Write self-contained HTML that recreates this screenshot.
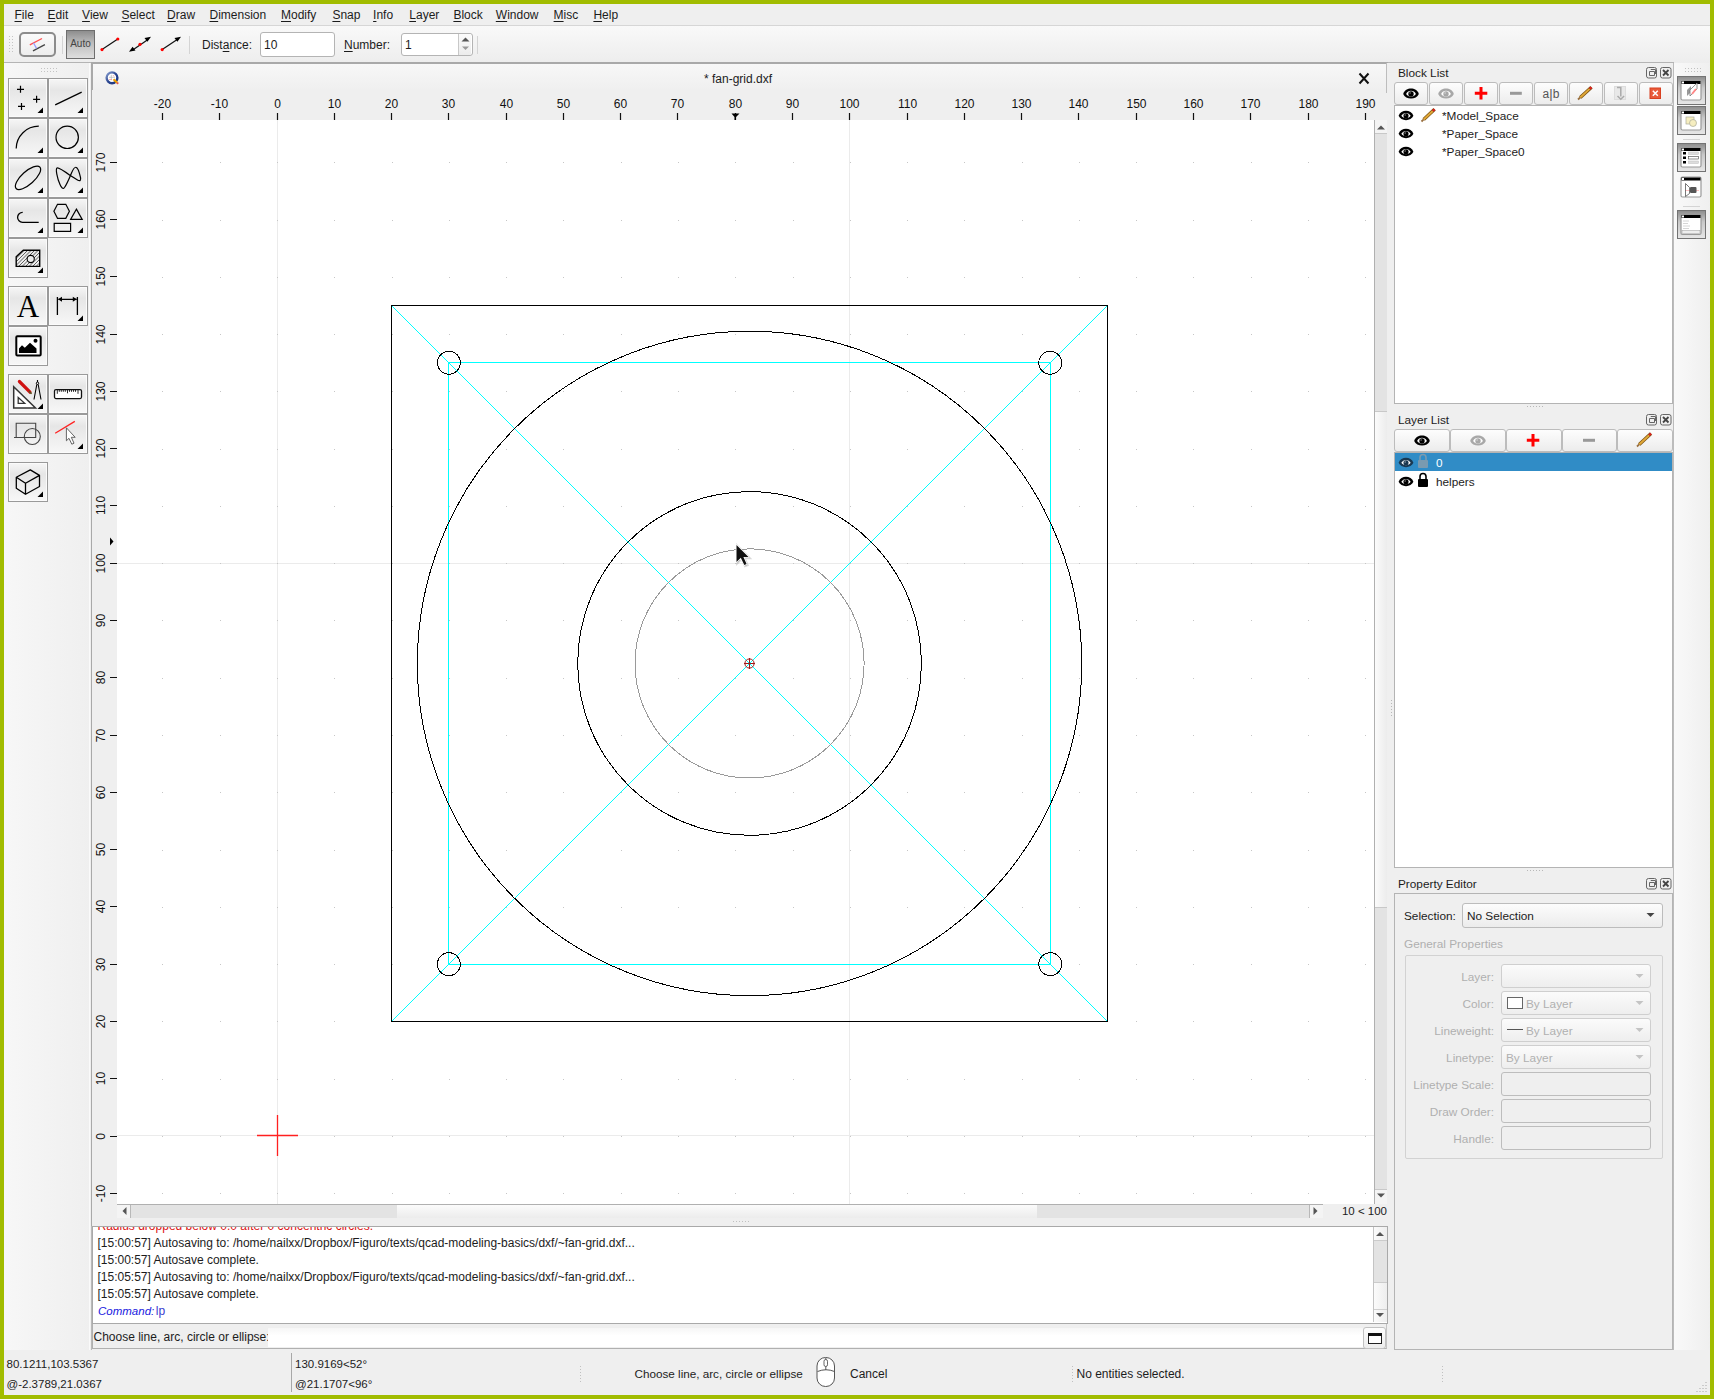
<!DOCTYPE html><html><head><meta charset="utf-8"><style>
html,body{margin:0;padding:0;}
body{width:1714px;height:1399px;overflow:hidden;background:#a1bc00;position:relative;font-family:"Liberation Sans", sans-serif;font-size:12px;color:#1c1c1c;}
.a{position:absolute;}
.t{position:absolute;white-space:nowrap;line-height:14px;}
u{text-decoration:underline;text-underline-offset:2px;text-decoration-thickness:1px;}
svg{overflow:visible}

</style></head><body>
<div class="a" style="left:4px;top:4px;width:1706px;height:1391px;background:#efefef"></div>
<div class="a" style="left:4px;top:25px;width:1706px;height:1px;background:#d6d6d6"></div>
<div class="t" style="left:14.5px;top:8px;font-size:12px"><u>F</u>ile</div>
<div class="t" style="left:47.6px;top:8px;font-size:12px"><u>E</u>dit</div>
<div class="t" style="left:82.1px;top:8px;font-size:12px"><u>V</u>iew</div>
<div class="t" style="left:121.4px;top:8px;font-size:12px"><u>S</u>elect</div>
<div class="t" style="left:167.1px;top:8px;font-size:12px"><u>D</u>raw</div>
<div class="t" style="left:209.5px;top:8px;font-size:12px"><u>D</u>imension</div>
<div class="t" style="left:281px;top:8px;font-size:12px"><u>M</u>odify</div>
<div class="t" style="left:332.4px;top:8px;font-size:12px"><u>S</u>nap</div>
<div class="t" style="left:373.1px;top:8px;font-size:12px"><u>I</u>nfo</div>
<div class="t" style="left:409.3px;top:8px;font-size:12px"><u>L</u>ayer</div>
<div class="t" style="left:453.4px;top:8px;font-size:12px"><u>B</u>lock</div>
<div class="t" style="left:495.8px;top:8px;font-size:12px"><u>W</u>indow</div>
<div class="t" style="left:553.6px;top:8px;font-size:12px"><u>M</u>isc</div>
<div class="t" style="left:593.4px;top:8px;font-size:12px"><u>H</u>elp</div>
<div class="a" style="left:4px;top:26px;width:1706px;height:37px;background:linear-gradient(#f9f9f9,#ededed)"></div>
<div class="a" style="left:4px;top:62px;width:1670px;height:1px;background:#b4b4b4"></div>
<svg class="a" style="left:0;top:0" width="20" height="60"><path d="M9 36h1v1h-1zM9 39h1v1h-1zM9 42h1v1h-1zM9 45h1v1h-1zM9 48h1v1h-1zM9 51h1v1h-1zM12 36h1v1h-1zM12 39h1v1h-1zM12 42h1v1h-1zM12 45h1v1h-1zM12 48h1v1h-1zM12 51h1v1h-1z" fill="#c4c4c4"/></svg>
<div class="a" style="left:19px;top:32px;width:33px;height:21px;border:2px solid #8c8c8c;border-radius:5px;background:linear-gradient(#fafafa,#ededed)"></div>
<svg class="a" style="left:0;top:0" width="60" height="60"><path d="M29.8 44.9L42 38.5" stroke="#ff5050" stroke-width="1.3"/><path d="M33 50.8L44.9 44.6" stroke="#444" stroke-width="1.3"/><path d="M33.5 42.9L36.5 48.4" stroke="#9a9aff" stroke-width="1.2"/></svg>
<div class="a" style="left:62px;top:36px;width:1px;height:18px;background:#d4d4d4"></div>
<div class="a" style="left:66px;top:30px;width:27px;height:27px;border:1px solid #6e6e6e;background:linear-gradient(#8e8e8e,#bdbdbd 45%,#dedede)"></div>
<div class="t" style="left:66px;top:37px;width:29px;text-align:center;font-size:10px;color:#444">Auto</div>
<svg class="a" style="left:95px;top:28px" width="95" height="34"><path d="M7 21.6L22.8 11" stroke="#111" stroke-width="1.2"/><circle cx="7" cy="21.6" r="1.6" fill="#f00"/><circle cx="22.8" cy="11" r="1.6" fill="#f00"/><path d="M37 22.5L53 11.5" stroke="#111" stroke-width="1.2"/><path d="M34 23.7L40.5 22.4L37.6 18.7z M56 8.8L49.5 10.1L52.4 13.8z" fill="#000"/><circle cx="45" cy="16.3" r="1.6" fill="#f00"/><path d="M67.2 21.6L83 10.9" stroke="#111" stroke-width="1.2"/><path d="M86 8.8L79.5 10.1L82.4 13.8z" fill="#000"/><circle cx="67.2" cy="21.6" r="1.6" fill="#f00"/></svg>
<div class="a" style="left:189px;top:36px;width:1px;height:18px;background:#d4d4d4"></div>
<div class="t" style="left:202px;top:38px">Dis<span>t</span><u>a</u>nce:</div>
<div class="a" style="left:260px;top:32px;width:73px;height:23px;border:1px solid #b4b4b4;border-radius:3px;background:#fff"></div>
<div class="t" style="left:264px;top:38px">10</div>
<div class="t" style="left:344px;top:38px"><u>N</u>umber:</div>
<div class="a" style="left:401px;top:33px;width:70px;height:21px;border:1px solid #b4b4b4;border-radius:3px;background:#fff"></div>
<div class="a" style="left:458px;top:34px;width:1px;height:21px;background:#c8c8c8"></div>
<div class="a" style="left:459px;top:34px;width:12px;height:21px;background:linear-gradient(#fbfbfb,#ececec)"></div>
<svg class="a" style="left:459px;top:33px" width="13" height="23"><path d="M2.5 8.5L6.5 4.5L10.5 8.5z" fill="#555"/><path d="M3 13.5L6.5 17L10 13.5z" fill="#999"/></svg>
<div class="t" style="left:405px;top:38px">1</div>
<div class="a" style="left:477px;top:36px;width:1px;height:18px;background:#d4d4d4"></div>
<div class="a" style="left:4px;top:63px;width:87px;height:1287px;background:linear-gradient(90deg,#f7f7f7,#efefef)"></div>
<div class="a" style="left:89px;top:63px;width:1px;height:1287px;background:#fafafa"></div>
<svg class="a" style="left:0;top:0" width="90" height="80"><path d="M41 68h1v1h-1zM41 71h1v1h-1zM44 68h1v1h-1zM44 71h1v1h-1zM47 68h1v1h-1zM47 71h1v1h-1zM50 68h1v1h-1zM50 71h1v1h-1zM53 68h1v1h-1zM53 71h1v1h-1zM56 68h1v1h-1zM56 71h1v1h-1z" fill="#c4c4c4"/></svg>
<div class="a" style="left:8px;top:78px;width:38px;height:38px;border:1px solid #9a9a9a;box-shadow:inset 0 0 0 1px #fbfbfb;background:linear-gradient(#f6f6f6 0%,#e6e6e6 30%,#f0f0f0 70%,#f7f7f7 100%)"></div>
<svg class="a" style="left:8px;top:78px" width="40" height="40"><path d="M9 11.3h7M12.5 7.8v7 M25.1 21.3h7M28.6 17.8v7 M10 28.4h7M13.5 24.9v7" stroke="#000" fill="none" stroke-width="1.2"/><path d="M29.5 35L35 29.5L35 35z" fill="#000"/></svg>
<div class="a" style="left:48px;top:78px;width:38px;height:38px;border:1px solid #9a9a9a;box-shadow:inset 0 0 0 1px #fbfbfb;background:linear-gradient(#f6f6f6 0%,#e6e6e6 30%,#f0f0f0 70%,#f7f7f7 100%)"></div>
<svg class="a" style="left:48px;top:78px" width="40" height="40"><path d="M7.2 26.8L33.7 14.2" stroke="#000" fill="none" stroke-width="1.3"/><path d="M29.5 35L35 29.5L35 35z" fill="#000"/></svg>
<div class="a" style="left:8px;top:118px;width:38px;height:38px;border:1px solid #9a9a9a;box-shadow:inset 0 0 0 1px #fbfbfb;background:linear-gradient(#f6f6f6 0%,#e6e6e6 30%,#f0f0f0 70%,#f7f7f7 100%)"></div>
<svg class="a" style="left:8px;top:118px" width="40" height="40"><path d="M8.2 30.5A22.6 22.6 0 0 1 30.8 8.2" stroke="#000" fill="none" stroke-width="1.2"/><path d="M29.5 35L35 29.5L35 35z" fill="#000"/></svg>
<div class="a" style="left:48px;top:118px;width:38px;height:38px;border:1px solid #9a9a9a;box-shadow:inset 0 0 0 1px #fbfbfb;background:linear-gradient(#f6f6f6 0%,#e6e6e6 30%,#f0f0f0 70%,#f7f7f7 100%)"></div>
<svg class="a" style="left:48px;top:118px" width="40" height="40"><circle cx="19.2" cy="19.3" r="11.2" stroke="#000" fill="none" stroke-width="1.2"/><path d="M29.5 35L35 29.5L35 35z" fill="#000"/></svg>
<div class="a" style="left:8px;top:158px;width:38px;height:38px;border:1px solid #9a9a9a;box-shadow:inset 0 0 0 1px #fbfbfb;background:linear-gradient(#f6f6f6 0%,#e6e6e6 30%,#f0f0f0 70%,#f7f7f7 100%)"></div>
<svg class="a" style="left:8px;top:158px" width="40" height="40"><ellipse cx="20" cy="19.8" rx="16" ry="6.4" transform="rotate(-42 20 19.8)" stroke="#000" fill="none" stroke-width="1.2"/><path d="M29.5 35L35 29.5L35 35z" fill="#000"/></svg>
<div class="a" style="left:48px;top:158px;width:38px;height:38px;border:1px solid #9a9a9a;box-shadow:inset 0 0 0 1px #fbfbfb;background:linear-gradient(#f6f6f6 0%,#e6e6e6 30%,#f0f0f0 70%,#f7f7f7 100%)"></div>
<svg class="a" style="left:48px;top:158px" width="40" height="40"><path d="M22.7 17.8C16 13 10.5 9 9 10C7.5 11 9 20 12 26.5C13.5 30 15 31.5 16.5 29.5C19 26 21 21 23.5 15C25 11.5 26.5 9 28 9.3C29.5 9.5 31.5 15 32.5 19.5C33.2 22.5 32 23.5 29.5 22C27 20.5 25 19.3 22.7 17.8z" stroke="#000" fill="none" stroke-width="1.2"/><path d="M29.5 35L35 29.5L35 35z" fill="#000"/></svg>
<div class="a" style="left:8px;top:198px;width:38px;height:38px;border:1px solid #9a9a9a;box-shadow:inset 0 0 0 1px #fbfbfb;background:linear-gradient(#f6f6f6 0%,#e6e6e6 30%,#f0f0f0 70%,#f7f7f7 100%)"></div>
<svg class="a" style="left:8px;top:198px" width="40" height="40"><path d="M14.7 14.3A5 5 0 1 0 14.5 24.3H30.7" stroke="#000" fill="none" stroke-width="1.3"/><path d="M29.5 35L35 29.5L35 35z" fill="#000"/></svg>
<div class="a" style="left:48px;top:198px;width:38px;height:38px;border:1px solid #9a9a9a;box-shadow:inset 0 0 0 1px #fbfbfb;background:linear-gradient(#f6f6f6 0%,#e6e6e6 30%,#f0f0f0 70%,#f7f7f7 100%)"></div>
<svg class="a" style="left:48px;top:198px" width="40" height="40"><path d="M9.5 6.3h8.3l3.6 6.9l-3.6 7.1h-8.3l-3.6-7.1z M28.4 11.1l5.8 10.3h-11.6z M6.2 25.3h16.4v8H6.2z" stroke="#000" fill="none" stroke-width="1.2"/><path d="M29.5 35L35 29.5L35 35z" fill="#000"/></svg>
<div class="a" style="left:8px;top:238px;width:38px;height:38px;border:1px solid #9a9a9a;box-shadow:inset 0 0 0 1px #fbfbfb;background:linear-gradient(#f6f6f6 0%,#e6e6e6 30%,#f0f0f0 70%,#f7f7f7 100%)"></div>
<svg class="a" style="left:8px;top:238px" width="40" height="40"><defs><clipPath id="hc"><path d="M8.2 18.7L15.3 12.3H31.7V28.4H8.2z"/></clipPath></defs><path d="M-12.0 30L6.0 12M-8.5 30L9.5 12M-5.0 30L13.0 12M-1.5 30L16.5 12M2.0 30L20.0 12M5.5 30L23.5 12M9.0 30L27.0 12M12.5 30L30.5 12M16.0 30L34.0 12M19.5 30L37.5 12M23.0 30L41.0 12M26.5 30L44.5 12M30.0 30L48.0 12M33.5 30L51.5 12M37.0 30L55.0 12M40.5 30L58.5 12" stroke="#222" stroke-width="0.7" clip-path="url(#hc)"/><circle cx="22.7" cy="21" r="3.6" fill="#ececec" stroke="#000" stroke-width="1.1"/><path d="M8.2 18.7L15.3 12.3H31.7V28.4H8.2z" stroke="#000" fill="none" stroke-width="1.4"/><path d="M29.5 35L35 29.5L35 35z" fill="#000"/></svg>
<div class="a" style="left:8px;top:286px;width:38px;height:38px;border:1px solid #9a9a9a;box-shadow:inset 0 0 0 1px #fbfbfb;background:linear-gradient(#f6f6f6 0%,#e6e6e6 30%,#f0f0f0 70%,#f7f7f7 100%)"></div>
<svg class="a" style="left:8px;top:286px" width="40" height="40"><text x="20" y="31" text-anchor="middle" font-family="Liberation Serif" font-size="31" fill="#000">A</text></svg>
<div class="a" style="left:48px;top:286px;width:38px;height:38px;border:1px solid #9a9a9a;box-shadow:inset 0 0 0 1px #fbfbfb;background:linear-gradient(#f6f6f6 0%,#e6e6e6 30%,#f0f0f0 70%,#f7f7f7 100%)"></div>
<svg class="a" style="left:48px;top:286px" width="40" height="40"><path d="M9.4 11v18 M29.4 11v18 M10.5 13.3h18" stroke="#000" fill="none" stroke-width="1.3"/><path d="M10 13.3l4-2.5v5z M28.8 13.3l-4-2.5v5z" fill="#000"/><path d="M29.5 35L35 29.5L35 35z" fill="#000"/></svg>
<div class="a" style="left:8px;top:326px;width:38px;height:38px;border:1px solid #9a9a9a;box-shadow:inset 0 0 0 1px #fbfbfb;background:linear-gradient(#f6f6f6 0%,#e6e6e6 30%,#f0f0f0 70%,#f7f7f7 100%)"></div>
<svg class="a" style="left:8px;top:326px" width="40" height="40"><rect x="8.3" y="10.3" width="24.4" height="19.3" rx="1" fill="#fff" stroke="#000" stroke-width="2"/><path d="M11 27v-4.5l3-3.3l2.8 2.5l5.2-5l6.5 5.8v4.5z" fill="#000"/><circle cx="27.5" cy="14.8" r="2" fill="#000"/></svg>
<div class="a" style="left:8px;top:374px;width:38px;height:38px;border:1px solid #9a9a9a;box-shadow:inset 0 0 0 1px #fbfbfb;background:linear-gradient(#f6f6f6 0%,#e6e6e6 30%,#f0f0f0 70%,#f7f7f7 100%)"></div>
<svg class="a" style="left:8px;top:374px" width="40" height="40"><path d="M5.7 12.7V33.9H27.5z" fill="#fff" stroke="#333" stroke-width="1.5"/><path d="M10.2 23.5V29.3H16.7z" fill="none" stroke="#333" stroke-width="1.3"/><path d="M11.4 7.5L22 18.2" stroke="#d01010" stroke-width="3.2" stroke-linecap="round"/><path d="M21 17.2L23.6 19.8" stroke="#552" stroke-width="1.5"/><circle cx="29.5" cy="9.3" r="1.2" fill="none" stroke="#000" stroke-width="1"/><path d="M29.5 6v2 M28.8 10.5L26 25.5 M30.2 10.5L33 25.5" stroke="#000" stroke-width="1.1" fill="none"/><path d="M29.5 35L35 29.5L35 35z" fill="#000"/></svg>
<div class="a" style="left:48px;top:374px;width:38px;height:38px;border:1px solid #9a9a9a;box-shadow:inset 0 0 0 1px #fbfbfb;background:linear-gradient(#f6f6f6 0%,#e6e6e6 30%,#f0f0f0 70%,#f7f7f7 100%)"></div>
<svg class="a" style="left:48px;top:374px" width="40" height="40"><rect x="6.5" y="15.6" width="27" height="9" rx="1.5" fill="#fff" stroke="#111" stroke-width="1.3"/><path d="M9.3 15.8v4 M11.3 15.8v2 M13.3 15.8v2 M15.3 15.8v2 M17.3 15.8v2 M19.5 15.8v3.5 M21.5 15.8v2 M23.5 15.8v2 M25.5 15.8v2 M27.5 15.8v2 M30 15.8v4" stroke="#111" stroke-width="0.9"/></svg>
<div class="a" style="left:8px;top:414px;width:38px;height:38px;border:1px solid #9a9a9a;box-shadow:inset 0 0 0 1px #fbfbfb;background:linear-gradient(#f6f6f6 0%,#e6e6e6 30%,#f0f0f0 70%,#f7f7f7 100%)"></div>
<svg class="a" style="left:8px;top:414px" width="40" height="40"><path d="M8.2 9.2H27.7V23.5H8.2z M6 23.5h3" fill="none" stroke="#444" stroke-width="1.1"/><circle cx="24.3" cy="22.5" r="8" fill="none" stroke="#444" stroke-width="1.1"/></svg>
<div class="a" style="left:48px;top:414px;width:38px;height:38px;border:1px solid #9a9a9a;box-shadow:inset 0 0 0 1px #fbfbfb;background:linear-gradient(#f6f6f6 0%,#e6e6e6 30%,#f0f0f0 70%,#f7f7f7 100%)"></div>
<svg class="a" style="left:48px;top:414px" width="40" height="40"><path d="M7.2 19.3L26.8 7.4" stroke="#f22" stroke-width="1.3"/><path d="M18.4 13.8V26.8L21 24.3L23.8 30.2L26 29.2L23.3 23.3H27.2z" fill="#fff" stroke="#555" stroke-width="0.9"/><path d="M29.5 35L35 29.5L35 35z" fill="#000"/></svg>
<div class="a" style="left:8px;top:462px;width:38px;height:38px;border:1px solid #9a9a9a;box-shadow:inset 0 0 0 1px #fbfbfb;background:linear-gradient(#f6f6f6 0%,#e6e6e6 30%,#f0f0f0 70%,#f7f7f7 100%)"></div>
<svg class="a" style="left:8px;top:462px" width="40" height="40"><path d="M22.3 7.9L8.3 15.3V26.3L17.5 32.3L31.5 24.5V13.4z M8.3 15.3L17.5 21.3L31.5 13.4 M17.5 21.3V32.3" fill="none" stroke="#000" stroke-width="1.3" stroke-linejoin="round"/><path d="M29.5 35L35 29.5L35 35z" fill="#000"/></svg>
<div class="a" style="left:91px;top:62px;width:1296px;height:1164px;background:#efefef;border-left:1px solid #a9a9a9;border-top:1px solid #a9a9a9;"></div>
<div class="a" style="left:92px;top:63px;width:1295px;height:27px;background:linear-gradient(#f8f8f8,#efefef)"></div>
<div class="a" style="left:91px;top:62px;width:1296px;height:2px;background:#a9a9a9"></div>
<div class="a" style="left:91px;top:62px;width:2px;height:32px;background:#a9a9a9"></div>
<div class="a" style="left:1386px;top:63px;width:1px;height:30px;background:#bdbdbd"></div>
<svg class="a" style="left:100px;top:66px" width="24" height="24"><defs><linearGradient id="qg" x1="0" y1="0" x2="1" y2="1"><stop offset="0" stop-color="#8aa0d0"/><stop offset="0.5" stop-color="#2a4590"/><stop offset="1" stop-color="#1a3580"/></linearGradient></defs><circle cx="12" cy="11.8" r="5.4" fill="#fff" stroke="url(#qg)" stroke-width="2.4"/><path d="M9 11.3h6 M11.3 8.8v5.5" stroke="#aaa" stroke-width="0.6"/><path d="M9 13.5h3 M13 9l1 1.5" stroke="#f08080" stroke-width="0.6"/><path d="M13.5 13.2L17.2 16.8" stroke="#f0a000" stroke-width="2.2"/><path d="M17 16.6L18.2 17.8" stroke="#e05050" stroke-width="2"/></svg>
<div class="t" style="left:638px;top:72px;width:200px;text-align:center">* fan-grid.dxf</div>
<svg class="a" style="left:1356px;top:71px" width="18" height="16"><path d="M3.5 2.5L12.5 12.5 M12.5 2.5L3.5 12.5" stroke="#111" stroke-width="2"/></svg>
<div class="a" style="left:92px;top:90px;width:1282px;height:30px;background:#efefef"></div>
<svg class="a" style="left:0;top:0" width="1400" height="1230" font-family="Liberation Sans" font-size="12" fill="#111"><path d="M162.5 113V120 M219.5 113V120 M277.5 113V120 M334.5 113V120 M391.5 113V120 M448.5 113V120 M506.5 113V120 M563.5 113V120 M620.5 113V120 M677.5 113V120 M735.5 113V120 M792.5 113V120 M849.5 113V120 M907.5 113V120 M964.5 113V120 M1021.5 113V120 M1078.5 113V120 M1136.5 113V120 M1193.5 113V120 M1250.5 113V120 M1308.5 113V120 M1365.5 113V120 M110 1193.5H117 M110 1136.5H117 M110 1078.5H117 M110 1021.5H117 M110 964.5H117 M110 906.5H117 M110 849.5H117 M110 792.5H117 M110 735.5H117 M110 677.5H117 M110 620.5H117 M110 563.5H117 M110 505.5H117 M110 448.5H117 M110 391.5H117 M110 334.5H117 M110 276.5H117 M110 219.5H117 M110 162.5H117" stroke="#111" stroke-width="1.2"/><text x="162.5" y="108" text-anchor="middle">-20</text><text x="219.5" y="108" text-anchor="middle">-10</text><text x="277.5" y="108" text-anchor="middle">0</text><text x="334.5" y="108" text-anchor="middle">10</text><text x="391.5" y="108" text-anchor="middle">20</text><text x="448.5" y="108" text-anchor="middle">30</text><text x="506.5" y="108" text-anchor="middle">40</text><text x="563.5" y="108" text-anchor="middle">50</text><text x="620.5" y="108" text-anchor="middle">60</text><text x="677.5" y="108" text-anchor="middle">70</text><text x="735.5" y="108" text-anchor="middle">80</text><text x="792.5" y="108" text-anchor="middle">90</text><text x="849.5" y="108" text-anchor="middle">100</text><text x="907.5" y="108" text-anchor="middle">110</text><text x="964.5" y="108" text-anchor="middle">120</text><text x="1021.5" y="108" text-anchor="middle">130</text><text x="1078.5" y="108" text-anchor="middle">140</text><text x="1136.5" y="108" text-anchor="middle">150</text><text x="1193.5" y="108" text-anchor="middle">160</text><text x="1250.5" y="108" text-anchor="middle">170</text><text x="1308.5" y="108" text-anchor="middle">180</text><text x="1365.5" y="108" text-anchor="middle">190</text><text x="0" y="0" transform="translate(105 1193.5) rotate(-90)" text-anchor="middle">-10</text><text x="0" y="0" transform="translate(105 1136.5) rotate(-90)" text-anchor="middle">0</text><text x="0" y="0" transform="translate(105 1078.5) rotate(-90)" text-anchor="middle">10</text><text x="0" y="0" transform="translate(105 1021.5) rotate(-90)" text-anchor="middle">20</text><text x="0" y="0" transform="translate(105 964.5) rotate(-90)" text-anchor="middle">30</text><text x="0" y="0" transform="translate(105 906.5) rotate(-90)" text-anchor="middle">40</text><text x="0" y="0" transform="translate(105 849.5) rotate(-90)" text-anchor="middle">50</text><text x="0" y="0" transform="translate(105 792.5) rotate(-90)" text-anchor="middle">60</text><text x="0" y="0" transform="translate(105 735.5) rotate(-90)" text-anchor="middle">70</text><text x="0" y="0" transform="translate(105 677.5) rotate(-90)" text-anchor="middle">80</text><text x="0" y="0" transform="translate(105 620.5) rotate(-90)" text-anchor="middle">90</text><text x="0" y="0" transform="translate(105 563.5) rotate(-90)" text-anchor="middle">100</text><text x="0" y="0" transform="translate(105 505.5) rotate(-90)" text-anchor="middle">110</text><text x="0" y="0" transform="translate(105 448.5) rotate(-90)" text-anchor="middle">120</text><text x="0" y="0" transform="translate(105 391.5) rotate(-90)" text-anchor="middle">130</text><text x="0" y="0" transform="translate(105 334.5) rotate(-90)" text-anchor="middle">140</text><text x="0" y="0" transform="translate(105 276.5) rotate(-90)" text-anchor="middle">150</text><text x="0" y="0" transform="translate(105 219.5) rotate(-90)" text-anchor="middle">160</text><text x="0" y="0" transform="translate(105 162.5) rotate(-90)" text-anchor="middle">170</text><path d="M731.5 113.5h8l-3.5 3.5v3.5h-1.5v-3.5z" fill="#000"/><path d="M110 537.5v8l3.5-4z" fill="#000"/></svg>
<svg class="a" style="left:0;top:0" width="1400" height="1230"><defs><clipPath id="cv"><rect x="117" y="120" width="1257" height="1084"/></clipPath></defs><rect x="117" y="120" width="1257" height="1084" fill="#fff"/><g clip-path="url(#cv)"><path d="M277.5 120V1204 M849.5 120V1204 M117 1135.5H1374 M117 563.5H1374" stroke="#ebebeb" stroke-width="1" fill="none" shape-rendering="crispEdges"/><path d="M162 1193h1v1h-1zM162 1136h1v1h-1zM162 1079h1v1h-1zM162 1021h1v1h-1zM162 964h1v1h-1zM162 907h1v1h-1zM162 850h1v1h-1zM162 792h1v1h-1zM162 735h1v1h-1zM162 678h1v1h-1zM162 620h1v1h-1zM162 563h1v1h-1zM162 506h1v1h-1zM162 449h1v1h-1zM162 391h1v1h-1zM162 334h1v1h-1zM162 277h1v1h-1zM162 220h1v1h-1zM162 162h1v1h-1zM220 1193h1v1h-1zM220 1136h1v1h-1zM220 1079h1v1h-1zM220 1021h1v1h-1zM220 964h1v1h-1zM220 907h1v1h-1zM220 850h1v1h-1zM220 792h1v1h-1zM220 735h1v1h-1zM220 678h1v1h-1zM220 620h1v1h-1zM220 563h1v1h-1zM220 506h1v1h-1zM220 449h1v1h-1zM220 391h1v1h-1zM220 334h1v1h-1zM220 277h1v1h-1zM220 220h1v1h-1zM220 162h1v1h-1zM277 1193h1v1h-1zM277 1136h1v1h-1zM277 1079h1v1h-1zM277 1021h1v1h-1zM277 964h1v1h-1zM277 907h1v1h-1zM277 850h1v1h-1zM277 792h1v1h-1zM277 735h1v1h-1zM277 678h1v1h-1zM277 620h1v1h-1zM277 563h1v1h-1zM277 506h1v1h-1zM277 449h1v1h-1zM277 391h1v1h-1zM277 334h1v1h-1zM277 277h1v1h-1zM277 220h1v1h-1zM277 162h1v1h-1zM334 1193h1v1h-1zM334 1136h1v1h-1zM334 1079h1v1h-1zM334 1021h1v1h-1zM334 964h1v1h-1zM334 907h1v1h-1zM334 850h1v1h-1zM334 792h1v1h-1zM334 735h1v1h-1zM334 678h1v1h-1zM334 620h1v1h-1zM334 563h1v1h-1zM334 506h1v1h-1zM334 449h1v1h-1zM334 391h1v1h-1zM334 334h1v1h-1zM334 277h1v1h-1zM334 220h1v1h-1zM334 162h1v1h-1zM392 1193h1v1h-1zM392 1136h1v1h-1zM392 1079h1v1h-1zM392 1021h1v1h-1zM392 964h1v1h-1zM392 907h1v1h-1zM392 850h1v1h-1zM392 792h1v1h-1zM392 735h1v1h-1zM392 678h1v1h-1zM392 620h1v1h-1zM392 563h1v1h-1zM392 506h1v1h-1zM392 449h1v1h-1zM392 391h1v1h-1zM392 334h1v1h-1zM392 277h1v1h-1zM392 220h1v1h-1zM392 162h1v1h-1zM449 1193h1v1h-1zM449 1136h1v1h-1zM449 1079h1v1h-1zM449 1021h1v1h-1zM449 964h1v1h-1zM449 907h1v1h-1zM449 850h1v1h-1zM449 792h1v1h-1zM449 735h1v1h-1zM449 678h1v1h-1zM449 620h1v1h-1zM449 563h1v1h-1zM449 506h1v1h-1zM449 449h1v1h-1zM449 391h1v1h-1zM449 334h1v1h-1zM449 277h1v1h-1zM449 220h1v1h-1zM449 162h1v1h-1zM506 1193h1v1h-1zM506 1136h1v1h-1zM506 1079h1v1h-1zM506 1021h1v1h-1zM506 964h1v1h-1zM506 907h1v1h-1zM506 850h1v1h-1zM506 792h1v1h-1zM506 735h1v1h-1zM506 678h1v1h-1zM506 620h1v1h-1zM506 563h1v1h-1zM506 506h1v1h-1zM506 449h1v1h-1zM506 391h1v1h-1zM506 334h1v1h-1zM506 277h1v1h-1zM506 220h1v1h-1zM506 162h1v1h-1zM563 1193h1v1h-1zM563 1136h1v1h-1zM563 1079h1v1h-1zM563 1021h1v1h-1zM563 964h1v1h-1zM563 907h1v1h-1zM563 850h1v1h-1zM563 792h1v1h-1zM563 735h1v1h-1zM563 678h1v1h-1zM563 620h1v1h-1zM563 563h1v1h-1zM563 506h1v1h-1zM563 449h1v1h-1zM563 391h1v1h-1zM563 334h1v1h-1zM563 277h1v1h-1zM563 220h1v1h-1zM563 162h1v1h-1zM621 1193h1v1h-1zM621 1136h1v1h-1zM621 1079h1v1h-1zM621 1021h1v1h-1zM621 964h1v1h-1zM621 907h1v1h-1zM621 850h1v1h-1zM621 792h1v1h-1zM621 735h1v1h-1zM621 678h1v1h-1zM621 620h1v1h-1zM621 563h1v1h-1zM621 506h1v1h-1zM621 449h1v1h-1zM621 391h1v1h-1zM621 334h1v1h-1zM621 277h1v1h-1zM621 220h1v1h-1zM621 162h1v1h-1zM678 1193h1v1h-1zM678 1136h1v1h-1zM678 1079h1v1h-1zM678 1021h1v1h-1zM678 964h1v1h-1zM678 907h1v1h-1zM678 850h1v1h-1zM678 792h1v1h-1zM678 735h1v1h-1zM678 678h1v1h-1zM678 620h1v1h-1zM678 563h1v1h-1zM678 506h1v1h-1zM678 449h1v1h-1zM678 391h1v1h-1zM678 334h1v1h-1zM678 277h1v1h-1zM678 220h1v1h-1zM678 162h1v1h-1zM735 1193h1v1h-1zM735 1136h1v1h-1zM735 1079h1v1h-1zM735 1021h1v1h-1zM735 964h1v1h-1zM735 907h1v1h-1zM735 850h1v1h-1zM735 792h1v1h-1zM735 735h1v1h-1zM735 678h1v1h-1zM735 620h1v1h-1zM735 563h1v1h-1zM735 506h1v1h-1zM735 449h1v1h-1zM735 391h1v1h-1zM735 334h1v1h-1zM735 277h1v1h-1zM735 220h1v1h-1zM735 162h1v1h-1zM793 1193h1v1h-1zM793 1136h1v1h-1zM793 1079h1v1h-1zM793 1021h1v1h-1zM793 964h1v1h-1zM793 907h1v1h-1zM793 850h1v1h-1zM793 792h1v1h-1zM793 735h1v1h-1zM793 678h1v1h-1zM793 620h1v1h-1zM793 563h1v1h-1zM793 506h1v1h-1zM793 449h1v1h-1zM793 391h1v1h-1zM793 334h1v1h-1zM793 277h1v1h-1zM793 220h1v1h-1zM793 162h1v1h-1zM850 1193h1v1h-1zM850 1136h1v1h-1zM850 1079h1v1h-1zM850 1021h1v1h-1zM850 964h1v1h-1zM850 907h1v1h-1zM850 850h1v1h-1zM850 792h1v1h-1zM850 735h1v1h-1zM850 678h1v1h-1zM850 620h1v1h-1zM850 563h1v1h-1zM850 506h1v1h-1zM850 449h1v1h-1zM850 391h1v1h-1zM850 334h1v1h-1zM850 277h1v1h-1zM850 220h1v1h-1zM850 162h1v1h-1zM907 1193h1v1h-1zM907 1136h1v1h-1zM907 1079h1v1h-1zM907 1021h1v1h-1zM907 964h1v1h-1zM907 907h1v1h-1zM907 850h1v1h-1zM907 792h1v1h-1zM907 735h1v1h-1zM907 678h1v1h-1zM907 620h1v1h-1zM907 563h1v1h-1zM907 506h1v1h-1zM907 449h1v1h-1zM907 391h1v1h-1zM907 334h1v1h-1zM907 277h1v1h-1zM907 220h1v1h-1zM907 162h1v1h-1zM964 1193h1v1h-1zM964 1136h1v1h-1zM964 1079h1v1h-1zM964 1021h1v1h-1zM964 964h1v1h-1zM964 907h1v1h-1zM964 850h1v1h-1zM964 792h1v1h-1zM964 735h1v1h-1zM964 678h1v1h-1zM964 620h1v1h-1zM964 563h1v1h-1zM964 506h1v1h-1zM964 449h1v1h-1zM964 391h1v1h-1zM964 334h1v1h-1zM964 277h1v1h-1zM964 220h1v1h-1zM964 162h1v1h-1zM1022 1193h1v1h-1zM1022 1136h1v1h-1zM1022 1079h1v1h-1zM1022 1021h1v1h-1zM1022 964h1v1h-1zM1022 907h1v1h-1zM1022 850h1v1h-1zM1022 792h1v1h-1zM1022 735h1v1h-1zM1022 678h1v1h-1zM1022 620h1v1h-1zM1022 563h1v1h-1zM1022 506h1v1h-1zM1022 449h1v1h-1zM1022 391h1v1h-1zM1022 334h1v1h-1zM1022 277h1v1h-1zM1022 220h1v1h-1zM1022 162h1v1h-1zM1079 1193h1v1h-1zM1079 1136h1v1h-1zM1079 1079h1v1h-1zM1079 1021h1v1h-1zM1079 964h1v1h-1zM1079 907h1v1h-1zM1079 850h1v1h-1zM1079 792h1v1h-1zM1079 735h1v1h-1zM1079 678h1v1h-1zM1079 620h1v1h-1zM1079 563h1v1h-1zM1079 506h1v1h-1zM1079 449h1v1h-1zM1079 391h1v1h-1zM1079 334h1v1h-1zM1079 277h1v1h-1zM1079 220h1v1h-1zM1079 162h1v1h-1zM1136 1193h1v1h-1zM1136 1136h1v1h-1zM1136 1079h1v1h-1zM1136 1021h1v1h-1zM1136 964h1v1h-1zM1136 907h1v1h-1zM1136 850h1v1h-1zM1136 792h1v1h-1zM1136 735h1v1h-1zM1136 678h1v1h-1zM1136 620h1v1h-1zM1136 563h1v1h-1zM1136 506h1v1h-1zM1136 449h1v1h-1zM1136 391h1v1h-1zM1136 334h1v1h-1zM1136 277h1v1h-1zM1136 220h1v1h-1zM1136 162h1v1h-1zM1193 1193h1v1h-1zM1193 1136h1v1h-1zM1193 1079h1v1h-1zM1193 1021h1v1h-1zM1193 964h1v1h-1zM1193 907h1v1h-1zM1193 850h1v1h-1zM1193 792h1v1h-1zM1193 735h1v1h-1zM1193 678h1v1h-1zM1193 620h1v1h-1zM1193 563h1v1h-1zM1193 506h1v1h-1zM1193 449h1v1h-1zM1193 391h1v1h-1zM1193 334h1v1h-1zM1193 277h1v1h-1zM1193 220h1v1h-1zM1193 162h1v1h-1zM1251 1193h1v1h-1zM1251 1136h1v1h-1zM1251 1079h1v1h-1zM1251 1021h1v1h-1zM1251 964h1v1h-1zM1251 907h1v1h-1zM1251 850h1v1h-1zM1251 792h1v1h-1zM1251 735h1v1h-1zM1251 678h1v1h-1zM1251 620h1v1h-1zM1251 563h1v1h-1zM1251 506h1v1h-1zM1251 449h1v1h-1zM1251 391h1v1h-1zM1251 334h1v1h-1zM1251 277h1v1h-1zM1251 220h1v1h-1zM1251 162h1v1h-1zM1308 1193h1v1h-1zM1308 1136h1v1h-1zM1308 1079h1v1h-1zM1308 1021h1v1h-1zM1308 964h1v1h-1zM1308 907h1v1h-1zM1308 850h1v1h-1zM1308 792h1v1h-1zM1308 735h1v1h-1zM1308 678h1v1h-1zM1308 620h1v1h-1zM1308 563h1v1h-1zM1308 506h1v1h-1zM1308 449h1v1h-1zM1308 391h1v1h-1zM1308 334h1v1h-1zM1308 277h1v1h-1zM1308 220h1v1h-1zM1308 162h1v1h-1zM1365 1193h1v1h-1zM1365 1136h1v1h-1zM1365 1079h1v1h-1zM1365 1021h1v1h-1zM1365 964h1v1h-1zM1365 907h1v1h-1zM1365 850h1v1h-1zM1365 792h1v1h-1zM1365 735h1v1h-1zM1365 678h1v1h-1zM1365 620h1v1h-1zM1365 563h1v1h-1zM1365 506h1v1h-1zM1365 449h1v1h-1zM1365 391h1v1h-1zM1365 334h1v1h-1zM1365 277h1v1h-1zM1365 220h1v1h-1zM1365 162h1v1h-1z" fill="#c6c6c6"/><path d="M391.56 305.44L1107.56 1021.44 M391.56 1021.44L1107.56 305.44" stroke="#00ffff" stroke-width="1" fill="none" shape-rendering="crispEdges"/><path d="M448.5 362.5H1050.5V964.5H448.5z" stroke="#00ffff" stroke-width="1.5" fill="none" shape-rendering="crispEdges"/><path d="M391.5 305.5H1107.5V1021.5H391.5z" stroke="#000" stroke-width="1.3" fill="none" shape-rendering="crispEdges"/><circle cx="749.56" cy="663.44" r="332.22" stroke="#000" stroke-width="1" fill="none" shape-rendering="crispEdges"/><circle cx="749.56" cy="663.44" r="171.84" stroke="#000" stroke-width="1" fill="none" shape-rendering="crispEdges"/><circle cx="749.56" cy="663.44" r="114.56" stroke="#9a9a9a" stroke-width="1" fill="none" shape-rendering="crispEdges"/><circle cx="448.84" cy="964.16" r="11.46" stroke="#000" stroke-width="1" fill="none" shape-rendering="crispEdges"/><circle cx="1050.28" cy="964.16" r="11.46" stroke="#000" stroke-width="1" fill="none" shape-rendering="crispEdges"/><circle cx="448.84" cy="362.72" r="11.46" stroke="#000" stroke-width="1" fill="none" shape-rendering="crispEdges"/><circle cx="1050.28" cy="362.72" r="11.46" stroke="#000" stroke-width="1" fill="none" shape-rendering="crispEdges"/><circle cx="749.5" cy="663.5" r="4.6" stroke="#a01818" stroke-width="1" fill="none"/><path d="M749.5 658V669 M744 663.5H755" stroke="#a01818" stroke-width="1"/><path d="M277.5 1115V1156 M257 1135.5H298" stroke="#ff2020" stroke-width="1.3"/><path d="M736.5 545V562L740.8 557.8L744.3 565L746.6 564L743.4 557H748.5z" fill="rgba(0,0,0,0.25)" transform="translate(0.8 1)" stroke="rgba(0,0,0,0.15)" stroke-width="2.5"/><path d="M736.5 545V562L740.8 557.8L744.3 565L746.6 564L743.4 557H748.5z" fill="#111" stroke="#fff" stroke-width="1.6" stroke-linejoin="round" paint-order="stroke"/></g></svg>
<div class="a" style="left:1374px;top:120px;width:13px;height:1084px;background:#f4f4f4;border-left:1px solid #b0b0b0;box-sizing:border-box"></div>
<div class="a" style="left:1375px;top:133px;width:12px;height:279px;background:#e3e3e3;border-top:1px solid #c8c8c8;border-bottom:1px solid #c8c8c8;box-sizing:border-box"></div>
<div class="a" style="left:1375px;top:412px;width:12px;height:495px;background:linear-gradient(90deg,#fbfbfb,#ececec)"></div>
<div class="a" style="left:1375px;top:907px;width:12px;height:283px;background:#e3e3e3;border-top:1px solid #c8c8c8;border-bottom:1px solid #c8c8c8;box-sizing:border-box"></div>
<svg class="a" style="left:1374px;top:120px" width="14" height="1084"><path d="M3 9.5L7 5.5L11 9.5z M3 1073.5L7 1077.5L11 1073.5z" fill="#555"/></svg>
<div class="a" style="left:117px;top:1204px;width:1206px;height:14px;background:#f4f4f4;border-top:1px solid #b0b0b0;box-sizing:border-box"></div>
<div class="a" style="left:130px;top:1205px;width:267px;height:13px;background:#e3e3e3;border-left:1px solid #b8b8b8;box-sizing:border-box"></div>
<div class="a" style="left:397px;top:1205px;width:640px;height:13px;background:linear-gradient(#fbfbfb,#ececec)"></div>
<div class="a" style="left:1037px;top:1205px;width:273px;height:13px;background:#e3e3e3;border-right:1px solid #b8b8b8;box-sizing:border-box"></div>
<svg class="a" style="left:117px;top:1204px" width="1206" height="14"><path d="M9.5 3L5.5 7L9.5 11z M1196.5 3L1200.5 7L1196.5 11z" fill="#555"/></svg>
<div class="t" style="left:1300px;top:1204px;width:87px;text-align:right;font-size:11.5px">10 &lt; 100</div>
<div class="a" style="left:1388px;top:63px;width:285px;height:1287px;background:#efefef"></div>
<div class="a" style="left:1673px;top:63px;width:1px;height:1287px;background:#bcbcbc"></div>
<div class="t" style="left:1398px;top:66px;font-size:11.8px">Block List</div>
<svg class="a" style="left:1640px;top:67px" width="34" height="14"><rect x="6.5" y="0.5" width="10" height="10.5" rx="2" fill="none" stroke="#666" stroke-width="1"/><path d="M9.5 4.5h5v4h-5z M11 3v-0.5h4.5v4.5" fill="none" stroke="#555" stroke-width="0.9"/><rect x="20.5" y="0.5" width="10.5" height="10.5" rx="2" fill="none" stroke="#666" stroke-width="1"/><path d="M23 3L28.5 8.5 M28.5 3L23 8.5" stroke="#444" stroke-width="1.8"/></svg>
<div class="a" style="left:1394px;top:82px;width:32px;height:21px;border:1px solid #bcbcbc;border-radius:3px;background:linear-gradient(#fdfdfd,#ececec)"></div>
<div class="a" style="left:1429px;top:82px;width:32px;height:21px;border:1px solid #bcbcbc;border-radius:3px;background:linear-gradient(#fdfdfd,#ececec)"></div>
<div class="a" style="left:1464px;top:82px;width:32px;height:21px;border:1px solid #bcbcbc;border-radius:3px;background:linear-gradient(#fdfdfd,#ececec)"></div>
<div class="a" style="left:1499px;top:82px;width:32px;height:21px;border:1px solid #bcbcbc;border-radius:3px;background:linear-gradient(#fdfdfd,#ececec)"></div>
<div class="a" style="left:1534px;top:82px;width:32px;height:21px;border:1px solid #bcbcbc;border-radius:3px;background:linear-gradient(#fdfdfd,#ececec)"></div>
<div class="a" style="left:1569px;top:82px;width:32px;height:21px;border:1px solid #bcbcbc;border-radius:3px;background:linear-gradient(#fdfdfd,#ececec)"></div>
<div class="a" style="left:1604px;top:82px;width:32px;height:21px;border:1px solid #bcbcbc;border-radius:3px;background:linear-gradient(#fdfdfd,#ececec)"></div>
<div class="a" style="left:1639px;top:82px;width:32px;height:21px;border:1px solid #bcbcbc;border-radius:3px;background:linear-gradient(#fdfdfd,#ececec)"></div>
<svg class="a" style="left:0;top:0" width="1714" height="130"><g transform="translate(1411 93.3) scale(1.0)"><path d="M-7.8 0.6C-5.5 -6.5 5.5 -6.5 7.8 0.6C5.5 6.6 -5.5 6.6 -7.8 0.6z" fill="#000"/><path d="M-4.9 0.6C-3 -3.6 3 -3.6 4.9 0.6C3 4 -3 4 -4.9 0.6z" fill="#fff"/><circle cx="0" cy="0.6" r="2.7" fill="#000"/><circle cx="-0.9" cy="-0.3" r="0.7" fill="#fff" opacity="0.6"/></g><g transform="translate(1446 93.3) scale(1.0)"><path d="M-7.8 0.6C-5.5 -6.5 5.5 -6.5 7.8 0.6C5.5 6.6 -5.5 6.6 -7.8 0.6z" fill="#a8a8a8"/><path d="M-4.9 0.6C-3 -3.6 3 -3.6 4.9 0.6C3 4 -3 4 -4.9 0.6z" fill="#fff"/><circle cx="0" cy="0.6" r="2.7" fill="#a8a8a8"/><circle cx="-0.9" cy="-0.3" r="0.7" fill="#fff" opacity="0.6"/></g><path d="M1481 87v12.5 M1474.8 93.3h12.5" stroke="#f00" stroke-width="3"/><path d="M1510 93.3h11.8" stroke="#999" stroke-width="3"/><text x="1551" y="98" text-anchor="middle" font-family="Liberation Sans" font-size="12" fill="#555">a<tspan font-size="13">|</tspan>b</text><path d="M1580.22 97.48L1591.50 87.20" stroke="#7a5010" stroke-width="3.4"/><path d="M1580.22 97.48L1589.65 88.88" stroke="#e0a838" stroke-width="2"/><path d="M1589.65 88.88L1591.50 87.20" stroke="#e02020" stroke-width="2.2"/><path d="M1578.00 99.50L1580.22 97.48" stroke="#9a7040" stroke-width="1.8"/><rect x="1614.5" y="86.5" width="11" height="13" fill="#e8e8e8" stroke="#ddd"/><path d="M1617 87.5h3.8v9 M1617.5 96l3.3 3.3l3.3-3.3" fill="none" stroke="#aaa" stroke-width="1.5"/><rect x="1650" y="88" width="10.5" height="10.5" fill="#e85a3a" stroke="#d84020"/><path d="M1652.8 90.8l5 5 M1657.8 90.8l-5 5" stroke="#fff" stroke-width="1.5"/></svg>
<div class="a" style="left:1394px;top:105px;width:277px;height:297px;background:#fff;border:1px solid #b4b4b4"></div>
<svg class="a" style="left:0;top:0" width="1714" height="200"><g transform="translate(1406 115.3) scale(0.95)"><path d="M-7.8 0.6C-5.5 -6.5 5.5 -6.5 7.8 0.6C5.5 6.6 -5.5 6.6 -7.8 0.6z" fill="#000"/><path d="M-4.9 0.6C-3 -3.6 3 -3.6 4.9 0.6C3 4 -3 4 -4.9 0.6z" fill="#fff"/><circle cx="0" cy="0.6" r="2.7" fill="#000"/><circle cx="-0.9" cy="-0.3" r="0.7" fill="#fff" opacity="0.6"/></g><path d="M1423.69 119.45L1434.60 109.20" stroke="#7a5010" stroke-width="3.4"/><path d="M1423.69 119.45L1432.78 110.91" stroke="#e0a838" stroke-width="2"/><path d="M1432.78 110.91L1434.60 109.20" stroke="#e02020" stroke-width="2.2"/><path d="M1421.50 121.50L1423.69 119.45" stroke="#9a7040" stroke-width="1.8"/><g transform="translate(1406 133.3) scale(0.95)"><path d="M-7.8 0.6C-5.5 -6.5 5.5 -6.5 7.8 0.6C5.5 6.6 -5.5 6.6 -7.8 0.6z" fill="#000"/><path d="M-4.9 0.6C-3 -3.6 3 -3.6 4.9 0.6C3 4 -3 4 -4.9 0.6z" fill="#fff"/><circle cx="0" cy="0.6" r="2.7" fill="#000"/><circle cx="-0.9" cy="-0.3" r="0.7" fill="#fff" opacity="0.6"/></g><g transform="translate(1406 151.3) scale(0.95)"><path d="M-7.8 0.6C-5.5 -6.5 5.5 -6.5 7.8 0.6C5.5 6.6 -5.5 6.6 -7.8 0.6z" fill="#000"/><path d="M-4.9 0.6C-3 -3.6 3 -3.6 4.9 0.6C3 4 -3 4 -4.9 0.6z" fill="#fff"/><circle cx="0" cy="0.6" r="2.7" fill="#000"/><circle cx="-0.9" cy="-0.3" r="0.7" fill="#fff" opacity="0.6"/></g></svg>
<div class="t" style="left:1442px;top:109px;font-size:11.8px">*Model_Space</div>
<div class="t" style="left:1442px;top:127px;font-size:11.8px">*Paper_Space</div>
<div class="t" style="left:1442px;top:145px;font-size:11.8px">*Paper_Space0</div>
<svg class="a" style="left:0;top:0" width="1714" height="1399" style="pointer-events:none"><path d="M1527 406h1v1h-1zM1530 406h1v1h-1zM1533 406h1v1h-1zM1536 406h1v1h-1zM1539 406h1v1h-1zM1542 406h1v1h-1z" fill="#b8b8b8"/></svg>
<svg class="a" style="left:0;top:0" width="1714" height="1399"><path d="M1391 700h1v1h-1zM1391 703h1v1h-1zM1391 706h1v1h-1zM1391 709h1v1h-1zM1391 712h1v1h-1zM1391 715h1v1h-1z" fill="#b8b8b8"/></svg>
<div class="t" style="left:1398px;top:413px;font-size:11.8px">Layer List</div>
<svg class="a" style="left:1640px;top:414px" width="34" height="14"><rect x="6.5" y="0.5" width="10" height="10.5" rx="2" fill="none" stroke="#666" stroke-width="1"/><path d="M9.5 4.5h5v4h-5z M11 3v-0.5h4.5v4.5" fill="none" stroke="#555" stroke-width="0.9"/><rect x="20.5" y="0.5" width="10.5" height="10.5" rx="2" fill="none" stroke="#666" stroke-width="1"/><path d="M23 3L28.5 8.5 M28.5 3L23 8.5" stroke="#444" stroke-width="1.8"/></svg>
<div class="a" style="left:1394px;top:429px;width:54px;height:21px;border:1px solid #bcbcbc;border-radius:3px;background:linear-gradient(#fdfdfd,#ececec)"></div>
<div class="a" style="left:1450px;top:429px;width:54px;height:21px;border:1px solid #bcbcbc;border-radius:3px;background:linear-gradient(#fdfdfd,#ececec)"></div>
<div class="a" style="left:1506px;top:429px;width:54px;height:21px;border:1px solid #bcbcbc;border-radius:3px;background:linear-gradient(#fdfdfd,#ececec)"></div>
<div class="a" style="left:1562px;top:429px;width:53px;height:21px;border:1px solid #bcbcbc;border-radius:3px;background:linear-gradient(#fdfdfd,#ececec)"></div>
<div class="a" style="left:1617px;top:429px;width:54px;height:21px;border:1px solid #bcbcbc;border-radius:3px;background:linear-gradient(#fdfdfd,#ececec)"></div>
<svg class="a" style="left:0;top:0" width="1714" height="500"><g transform="translate(1422 440.3) scale(1.0)"><path d="M-7.8 0.6C-5.5 -6.5 5.5 -6.5 7.8 0.6C5.5 6.6 -5.5 6.6 -7.8 0.6z" fill="#000"/><path d="M-4.9 0.6C-3 -3.6 3 -3.6 4.9 0.6C3 4 -3 4 -4.9 0.6z" fill="#fff"/><circle cx="0" cy="0.6" r="2.7" fill="#000"/><circle cx="-0.9" cy="-0.3" r="0.7" fill="#fff" opacity="0.6"/></g><g transform="translate(1478 440.3) scale(1.0)"><path d="M-7.8 0.6C-5.5 -6.5 5.5 -6.5 7.8 0.6C5.5 6.6 -5.5 6.6 -7.8 0.6z" fill="#a8a8a8"/><path d="M-4.9 0.6C-3 -3.6 3 -3.6 4.9 0.6C3 4 -3 4 -4.9 0.6z" fill="#fff"/><circle cx="0" cy="0.6" r="2.7" fill="#a8a8a8"/><circle cx="-0.9" cy="-0.3" r="0.7" fill="#fff" opacity="0.6"/></g><path d="M1533 434v12.5 M1526.8 440.3h12.5" stroke="#f00" stroke-width="3"/><path d="M1583 440.3h12" stroke="#999" stroke-width="3"/><path d="M1639.20 444.46L1651.00 433.50" stroke="#7a5010" stroke-width="3.4"/><path d="M1639.20 444.46L1649.17 435.20" stroke="#e0a838" stroke-width="2"/><path d="M1649.17 435.20L1651.00 433.50" stroke="#e02020" stroke-width="2.2"/><path d="M1637.00 446.50L1639.20 444.46" stroke="#9a7040" stroke-width="1.8"/></svg>
<div class="a" style="left:1394px;top:452px;width:277px;height:414px;background:#fff;border:1px solid #b4b4b4"></div>
<div class="a" style="left:1395px;top:453px;width:277px;height:18px;background:#308cc6"></div>
<svg class="a" style="left:0;top:0" width="1714" height="500"><g transform="translate(1406 462.3) scale(0.95)"><path d="M-7.8 0.6C-5.5 -6.5 5.5 -6.5 7.8 0.6C5.5 6.6 -5.5 6.6 -7.8 0.6z" fill="#1a3850"/><path d="M-4.9 0.6C-3 -3.6 3 -3.6 4.9 0.6C3 4 -3 4 -4.9 0.6z" fill="#fff"/><circle cx="0" cy="0.6" r="2.7" fill="#1a3850"/><circle cx="-0.9" cy="-0.3" r="0.7" fill="#fff" opacity="0.6"/></g><path d="M1420 460v-2.5a3 3 0 0 1 6 0v2.5" fill="none" stroke="#7a9ab0" stroke-width="1.6"/><rect x="1418" y="460" width="10" height="8" rx="1" fill="#7a9ab0"/><g transform="translate(1406 481.3) scale(0.95)"><path d="M-7.8 0.6C-5.5 -6.5 5.5 -6.5 7.8 0.6C5.5 6.6 -5.5 6.6 -7.8 0.6z" fill="#000"/><path d="M-4.9 0.6C-3 -3.6 3 -3.6 4.9 0.6C3 4 -3 4 -4.9 0.6z" fill="#fff"/><circle cx="0" cy="0.6" r="2.7" fill="#000"/><circle cx="-0.9" cy="-0.3" r="0.7" fill="#fff" opacity="0.6"/></g><path d="M1420 479v-2.5a3 3 0 0 1 6 0v2.5" fill="none" stroke="#000" stroke-width="1.6"/><rect x="1418" y="479" width="10" height="8" rx="1" fill="#000"/></svg>
<div class="t" style="left:1436px;top:456px;font-size:11.8px;color:#fff">0</div>
<div class="t" style="left:1436px;top:475px;font-size:11.8px">helpers</div>
<svg class="a" style="left:0;top:0" width="1714" height="1399" style="pointer-events:none"><path d="M1527 870h1v1h-1zM1530 870h1v1h-1zM1533 870h1v1h-1zM1536 870h1v1h-1zM1539 870h1v1h-1zM1542 870h1v1h-1z" fill="#b8b8b8"/></svg>
<div class="t" style="left:1398px;top:877px;font-size:11.8px">Property Editor</div>
<svg class="a" style="left:1640px;top:878px" width="34" height="14"><rect x="6.5" y="0.5" width="10" height="10.5" rx="2" fill="none" stroke="#666" stroke-width="1"/><path d="M9.5 4.5h5v4h-5z M11 3v-0.5h4.5v4.5" fill="none" stroke="#555" stroke-width="0.9"/><rect x="20.5" y="0.5" width="10.5" height="10.5" rx="2" fill="none" stroke="#666" stroke-width="1"/><path d="M23 3L28.5 8.5 M28.5 3L23 8.5" stroke="#444" stroke-width="1.8"/></svg>
<div class="a" style="left:1394px;top:893px;width:277px;height:455px;border:1px solid #b4b4b4"></div>
<div class="t" style="left:1404px;top:909px;font-size:11.8px">Selection:</div>
<div class="a" style="left:1462px;top:903px;width:199px;height:23px;border:1px solid #bcbcbc;border-radius:3px;background:linear-gradient(#fcfcfc,#ececec)"></div>
<div class="t" style="left:1467px;top:909px;font-size:11.8px">No Selection</div>
<svg class="a" style="left:1645px;top:910px" width="12" height="10"><path d="M1.5 3h8l-4 4z" fill="#444"/></svg>
<div class="t" style="left:1404px;top:937px;font-size:11.8px;color:#b0b0b0">General Properties</div>
<div class="a" style="left:1405px;top:955px;width:256px;height:202px;border:1px solid #d2d2d2;border-radius:2px"></div>
<div class="t" style="left:1380px;top:970px;width:114px;text-align:right;font-size:11.8px;color:#b0b0b0">Layer:</div>
<div class="a" style="left:1501px;top:964px;width:148px;height:22px;border:1px solid #cfcfcf;border-radius:3px;background:linear-gradient(#fbfbfb,#eeeeee)"></div>
<svg class="a" style="left:1634px;top:971px" width="12" height="10"><path d="M1.5 3h8l-4 4z" fill="#c4c4c4"/></svg>
<div class="t" style="left:1380px;top:997px;width:114px;text-align:right;font-size:11.8px;color:#b0b0b0">Color:</div>
<div class="a" style="left:1501px;top:991px;width:148px;height:22px;border:1px solid #cfcfcf;border-radius:3px;background:linear-gradient(#fbfbfb,#eeeeee)"></div>
<svg class="a" style="left:1634px;top:998px" width="12" height="10"><path d="M1.5 3h8l-4 4z" fill="#c4c4c4"/></svg>
<div class="a" style="left:1507px;top:997px;width:14px;height:10px;border:1px solid #666;background:#fff"></div>
<div class="t" style="left:1526px;top:997px;font-size:11.8px;color:#b0b0b0">By Layer</div>
<div class="t" style="left:1380px;top:1024px;width:114px;text-align:right;font-size:11.8px;color:#b0b0b0">Lineweight:</div>
<div class="a" style="left:1501px;top:1018px;width:148px;height:22px;border:1px solid #cfcfcf;border-radius:3px;background:linear-gradient(#fbfbfb,#eeeeee)"></div>
<svg class="a" style="left:1634px;top:1025px" width="12" height="10"><path d="M1.5 3h8l-4 4z" fill="#c4c4c4"/></svg>
<div class="a" style="left:1507px;top:1029px;width:16px;height:1px;background:#555"></div>
<div class="t" style="left:1526px;top:1024px;font-size:11.8px;color:#b0b0b0">By Layer</div>
<div class="t" style="left:1380px;top:1051px;width:114px;text-align:right;font-size:11.8px;color:#b0b0b0">Linetype:</div>
<div class="a" style="left:1501px;top:1045px;width:148px;height:22px;border:1px solid #cfcfcf;border-radius:3px;background:linear-gradient(#fbfbfb,#eeeeee)"></div>
<svg class="a" style="left:1634px;top:1052px" width="12" height="10"><path d="M1.5 3h8l-4 4z" fill="#c4c4c4"/></svg>
<div class="t" style="left:1506px;top:1051px;font-size:11.8px;color:#b0b0b0">By Layer</div>
<div class="t" style="left:1380px;top:1078px;width:114px;text-align:right;font-size:11.8px;color:#b0b0b0">Linetype Scale:</div>
<div class="a" style="left:1501px;top:1072px;width:148px;height:22px;border:1px solid #bdbdbd;border-radius:3px;background:#efefef"></div>
<div class="t" style="left:1380px;top:1105px;width:114px;text-align:right;font-size:11.8px;color:#b0b0b0">Draw Order:</div>
<div class="a" style="left:1501px;top:1099px;width:148px;height:22px;border:1px solid #bdbdbd;border-radius:3px;background:#efefef"></div>
<div class="t" style="left:1380px;top:1132px;width:114px;text-align:right;font-size:11.8px;color:#b0b0b0">Handle:</div>
<div class="a" style="left:1501px;top:1126px;width:148px;height:22px;border:1px solid #bdbdbd;border-radius:3px;background:#efefef"></div>
<div class="a" style="left:1674px;top:63px;width:36px;height:1287px;background:linear-gradient(90deg,#f9f9f9,#efefef)"></div>
<svg class="a" style="left:0;top:0" width="1714" height="300"><path d="M1685 68h1v1h-1zM1685 71h1v1h-1zM1688 68h1v1h-1zM1688 71h1v1h-1zM1691 68h1v1h-1zM1691 71h1v1h-1zM1694 68h1v1h-1zM1694 71h1v1h-1zM1697 68h1v1h-1zM1697 71h1v1h-1zM1700 68h1v1h-1zM1700 71h1v1h-1z" fill="#c0c0c0"/><path d="M1683 139.5h17 M1683 206.5h17" stroke="#d4d4d4" stroke-width="1"/></svg>
<div class="a" style="left:1677px;top:76px;width:27px;height:27px;border:1px solid #737373;background:linear-gradient(#8e8e8e,#c8c8c8 40%,#e6e6e6)"></div>
<div class="a" style="left:1677px;top:106px;width:27px;height:27px;border:1px solid #737373;background:linear-gradient(#8e8e8e,#c8c8c8 40%,#e6e6e6)"></div>
<div class="a" style="left:1677px;top:143px;width:27px;height:27px;border:1px solid #737373;background:linear-gradient(#8e8e8e,#c8c8c8 40%,#e6e6e6)"></div>
<div class="a" style="left:1677px;top:210px;width:27px;height:27px;border:1px solid #737373;background:linear-gradient(#8e8e8e,#c8c8c8 40%,#e6e6e6)"></div>
<svg class="a" style="left:0;top:0" width="1714" height="300"><rect x="1681.0" y="80.5" width="20.0" height="19.5" rx="1.5" fill="#fff" stroke="#9a9a9a" stroke-width="1.2"/><rect x="1681.5" y="81" width="19.0" height="3" fill="#000"/><rect x="1682.0" y="81.5" width="2" height="2" fill="#fff"/><path d="M1687 96L1691 92V86L1687 90z" fill="#999"/><path d="M1690 96L1697 89V83L1690 90z" fill="#fff" stroke="#777" stroke-width="0.8"/><path d="M1692 94L1696 89" stroke="#f88" stroke-width="2"/><rect x="1681.0" y="110.5" width="20.0" height="19.5" rx="1.5" fill="#fff" stroke="#9a9a9a" stroke-width="1.2"/><rect x="1681.5" y="111" width="19.0" height="3" fill="#000"/><rect x="1682.0" y="111.5" width="2" height="2" fill="#fff"/><rect x="1686" y="117" width="8" height="7" fill="#f6eec0" stroke="#aa9" stroke-width="0.7"/><circle cx="1693" cy="123" r="3.5" fill="#f6eec0" stroke="#aa9" stroke-width="0.7"/><rect x="1681.0" y="147.5" width="20.0" height="19.5" rx="1.5" fill="#fff" stroke="#9a9a9a" stroke-width="1.2"/><rect x="1681.5" y="148" width="19.0" height="3" fill="#000"/><rect x="1682.0" y="148.5" width="2" height="2" fill="#fff"/><rect x="1683" y="152" width="3" height="2.5" fill="#000"/><rect x="1683" y="156.5" width="3" height="2.5" fill="#000"/><rect x="1683" y="161" width="3" height="2.5" fill="#000"/><rect x="1688.5" y="152" width="10" height="2.5" fill="#ddd" stroke="#bbb" stroke-width="0.5"/><rect x="1688.5" y="156.5" width="10" height="2.5" fill="#fff" stroke="#444" stroke-width="0.6"/><rect x="1688.5" y="161" width="10" height="2.5" fill="#ddd" stroke="#bbb" stroke-width="0.5"/><rect x="1681.0" y="177.0" width="20.0" height="20.0" rx="1.5" fill="#fff" stroke="#9a9a9a" stroke-width="1.2"/><rect x="1681.5" y="177.5" width="19.0" height="3" fill="#000"/><rect x="1682.0" y="178.0" width="2" height="2" fill="#fff"/><path d="M1685 190.5h14" stroke="#f99" stroke-width="0.6"/><path d="M1685.5 183.5v13 M1685.5 183.5l4 4v6l-4 3" fill="none" stroke="#555" stroke-width="0.8"/><rect x="1690" y="187" width="6.5" height="6" rx="1" fill="#555"/><rect x="1681.0" y="214.5" width="20.0" height="20" rx="1.5" fill="#fff" stroke="#9a9a9a" stroke-width="1.2"/><rect x="1681.5" y="215" width="19.0" height="3" fill="#000"/><rect x="1682.0" y="215.5" width="2" height="2" fill="#fff"/><path d="M1683 221h6 M1683 223.5h5 M1683 226h7 M1683 228.5h6" stroke="#ccc" stroke-width="0.8"/><rect x="1682" y="230.5" width="18" height="3" fill="#eee" stroke="#999" stroke-width="0.5"/></svg>
<div class="a" style="left:92px;top:1226px;width:1294px;height:96px;background:#fff;border:1px solid #a9a9a9"></div>
<div class="a" style="left:91px;top:1226px;width:1px;height:124px;background:#b9b9b9"></div>
<div class="a" style="left:93px;top:1227px;width:1280px;height:95px;overflow:hidden">
<div class="t" style="left:4.5px;top:-8px;color:#dc1414">Radius dropped below 0.0 after 0 concentric circles.</div>
<div class="t" style="left:4.5px;top:8.8px">[15:00:57] Autosaving to: /home/nailxx/Dropbox/Figuro/texts/qcad-modeling-basics/dxf/~fan-grid.dxf...</div>
<div class="t" style="left:4.5px;top:25.7px">[15:00:57] Autosave complete.</div>
<div class="t" style="left:4.5px;top:42.6px">[15:05:57] Autosaving to: /home/nailxx/Dropbox/Figuro/texts/qcad-modeling-basics/dxf/~fan-grid.dxf...</div>
<div class="t" style="left:4.5px;top:59.5px">[15:05:57] Autosave complete.</div>
<div class="t" style="left:5px;top:76.5px;color:#2020e0"><i style="font-size:11.5px">Command:</i><span style="color:#3a3ad0;margin-left:1.5px">lp</span></div>
</div>
<div class="a" style="left:1373px;top:1227px;width:14px;height:95px;background:linear-gradient(90deg,#fbfbfb,#eeeeee);border-left:1px solid #c4c4c4;box-sizing:border-box"></div>
<div class="a" style="left:1374px;top:1240px;width:13px;height:43px;background:#e3e3e3;border-top:1px solid #cbcbcb;border-bottom:1px solid #cbcbcb;box-sizing:border-box"></div>
<div class="a" style="left:1374px;top:1309px;width:13px;height:1px;background:#d0d0d0"></div>
<svg class="a" style="left:1373px;top:1227px" width="14" height="96"><path d="M3 9L7 5L11 9z M3 86L7 90L11 86z" fill="#555"/></svg>
<div class="a" style="left:92px;top:1324px;width:1295px;height:25px;background:#efefef;border-left:1px solid #b0b0b0;border-bottom:1px solid #b0b0b0;border-right:1px solid #c4c4c4;box-sizing:border-box"></div>
<div class="t" style="left:93.5px;top:1330px">Choose line, arc, circle or ellipse:</div>
<div class="a" style="left:268px;top:1328px;width:1095px;height:19px;background:linear-gradient(#f6f6f6,#ffffff 40%)"></div>
<div class="a" style="left:1363px;top:1327px;width:21px;height:20px;border:1px solid #c2c2c2;border-radius:3px;background:linear-gradient(#fdfdfd,#ededed)"></div>
<svg class="a" style="left:1364px;top:1328px" width="22" height="21"><rect x="4.5" y="5.5" width="13" height="10" fill="#fff" stroke="#222" stroke-width="1"/><rect x="4" y="5" width="14" height="3" fill="#111"/></svg>
<div class="t" style="left:6.5px;top:1356.5px;font-size:11.5px">80.1211,103.5367</div>
<div class="t" style="left:6.5px;top:1376.5px;font-size:11.5px">@-2.3789,21.0367</div>
<div class="a" style="left:291px;top:1353px;width:1px;height:39px;background:#a8a8a8"></div>
<div class="t" style="left:295px;top:1356.5px;font-size:11.5px">130.9169&lt;52°</div>
<div class="t" style="left:295px;top:1376.5px;font-size:11.5px">@21.1707&lt;96°</div>
<svg class="a" style="left:0;top:0" width="1714" height="1399"><path d="M580 1366h1v1h-1zM580 1369h1v1h-1zM580 1372h1v1h-1zM580 1375h1v1h-1zM580 1378h1v1h-1zM580 1381h1v1h-1z M1072 1366h1v1h-1zM1072 1369h1v1h-1zM1072 1372h1v1h-1zM1072 1375h1v1h-1zM1072 1378h1v1h-1zM1072 1381h1v1h-1z M1442 1366h1v1h-1zM1442 1369h1v1h-1zM1442 1372h1v1h-1zM1442 1375h1v1h-1zM1442 1378h1v1h-1zM1442 1381h1v1h-1z M733 1221h1v1h-1zM736 1221h1v1h-1zM739 1221h1v1h-1zM742 1221h1v1h-1zM745 1221h1v1h-1zM748 1221h1v1h-1z" fill="#c0c0c0"/><rect x="817" y="1357.5" width="17.5" height="29" rx="8.5" fill="#fff" stroke="#555" stroke-width="1"/><path d="M817.5 1371.5Q826 1368 834.5 1371.5 M825.8 1358v12" fill="none" stroke="#555" stroke-width="1"/><rect x="824" y="1359.5" width="3.5" height="7" rx="1.7" fill="#fff" stroke="#555" stroke-width="0.9"/></svg>
<div class="t" style="left:634.5px;top:1366.5px;font-size:11.7px">Choose line, arc, circle or ellipse</div>
<div class="t" style="left:850px;top:1366.5px">Cancel</div>
<div class="t" style="left:1076.5px;top:1366.5px">No entities selected.</div>
<svg class="a" style="left:0;top:0" width="1714" height="1399"><path d="M1705.5 1382h1v1h-1zM1702.5 1385h1v1h-1zM1705.5 1385h1v1h-1zM1699.5 1388h1v1h-1zM1702.5 1388h1v1h-1zM1705.5 1388h1v1h-1zM1696.5 1391h1v1h-1zM1699.5 1391h1v1h-1zM1702.5 1391h1v1h-1zM1705.5 1391h1v1h-1z" fill="#a8a8a8"/></svg>
</body></html>
